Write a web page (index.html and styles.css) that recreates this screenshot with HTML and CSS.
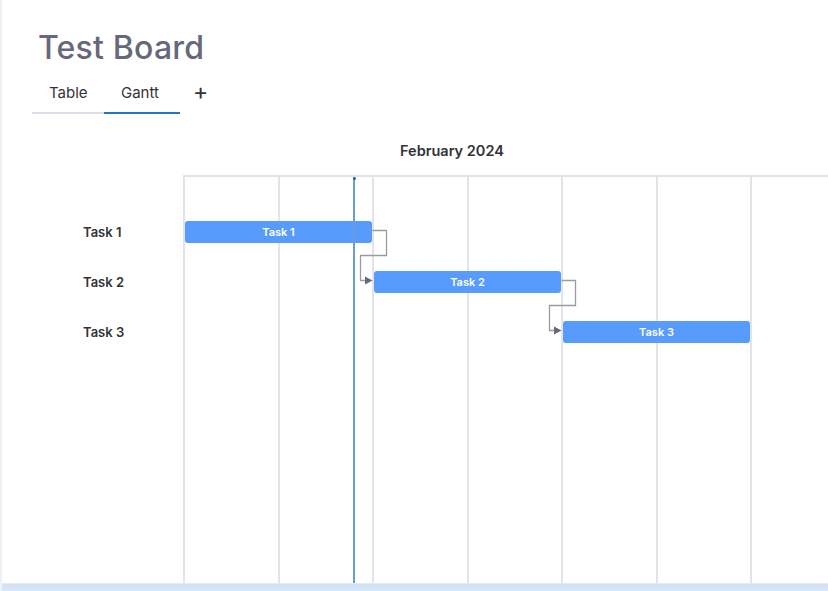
FILE: index.html
```html
<!DOCTYPE html>
<html lang="en">
<head>
    <meta charset="UTF-8">
    <meta name="viewport" content="width=device-width, initial-scale=1.0">
    <title>Test Board</title>
    <link rel="stylesheet" href="styles.css">
</head>
<body>
    <div class="board">
        <header class="board-header">
            <h1>Test Board</h1>
            <nav class="tabs">
                <span class="tab">Table</span>
                <span class="tab active">Gantt</span>
                <span class="tab-add">+</span>
            </nav>
        </header>

        <section class="gantt">
            <div class="gantt-title">February 2024</div>
            <div class="gantt-body">
                <div class="labels">
                    <div class="label">Task 1</div>
                    <div class="label">Task 2</div>
                    <div class="label">Task 3</div>
                </div>
                <div class="timeline">
                    <div class="columns">
                        <div class="col"></div><div class="col"></div><div class="col"></div>
                        <div class="col"></div><div class="col"></div><div class="col"></div>
                        <div class="col"></div>
                    </div>
                    <div class="rows">
                        <div class="row"><div class="bar" style="grid-column: 1 / 3">Task 1</div></div>
                        <div class="row"><div class="bar" style="grid-column: 3 / 5">Task 2</div></div>
                        <div class="row"><div class="bar" style="grid-column: 5 / 7">Task 3</div></div>
                    </div>
                    <svg class="links" width="645" height="410" viewBox="0 0 645 410">
                        <path d="M189.5 55.5 H203.5 V80.5 H177.5 V105.5 H183" />
                        <polygon points="182,101.5 189.5,105.5 182,109.5" />
                        <path d="M378.5 105.5 H392.5 V130.5 H366.5 V155.5 H372" />
                        <polygon points="371,151.5 378.5,155.5 371,159.5" />
                    </svg>
                    <div class="today"></div>
                </div>
            </div>
        </section>
        <div class="footer-band"></div>
    </div>
</body>
</html>
```

FILE: styles.css
```css
body {
    margin: 0;
    background: #fff;
    font-family: "Inter", "Noto Sans", sans-serif;
    color: #323338;
}
.board {
    height: 591px;
    border-left: 2px solid #eef1f6;
    box-sizing: border-box;
    display: flex;
    flex-direction: column;
    overflow: hidden;
}
.board-header {
    padding: 28px 0 0 30px;
}
h1 {
    margin: 0 0 0 6px;
    font-weight: 500;
    font-size: 32px;
    line-height: 40px;
    color: #676879;
    letter-spacing: 0.2px;
}
.tabs {
    display: flex;
    align-items: center;
    margin-top: 14px;
}
.tab {
    font-size: 15px;
    line-height: 20px;
    padding: 0 17px 9px;
    border-bottom: 2px solid #dcdfe7;
    color: #323338;
}
.tab:first-child {
    width: 38px;
}
.tab.active {
    width: 42px;
    border-bottom-color: #1f76c2;
}
.tab-add {
    font-size: 23px;
    line-height: 20px;
    margin: 0 0 12px 13px;
    color: #323338;
}
.gantt {
    flex: 1;
    display: flex;
    flex-direction: column;
    margin-top: 28px;
}
.gantt-title {
    font-weight: 600;
    font-size: 14.5px;
    line-height: 18px;
    padding-left: 398px;
    color: #323338;
}
.gantt-body {
    flex: 1;
    display: flex;
    margin-top: 15px;
}
.labels {
    flex: 0 0 181px;
    padding-top: 32px;
}
.label {
    height: 50px;
    line-height: 50px;
    padding-left: 81px;
    font-weight: 600;
    font-size: 13px;
}
.timeline {
    position: relative;
    flex: 1;
    min-width: 0;
    overflow: hidden;
    border-top: 2px solid #e1e4ea;
}
.columns {
    position: absolute;
    inset: 0;
    display: grid;
    grid-template-columns: repeat(7, 94.5px);
}
.col {
    border-left: 2px solid #e1e4ea;
}
.rows {
    position: relative;
    padding-top: 30px;
}
.row {
    height: 50px;
    display: grid;
    grid-template-columns: repeat(7, 94.5px);
    align-items: center;
}
.bar {
    height: 22px;
    margin: 0 0 0 2px;
    background: #579bfc;
    border-radius: 3px;
    color: #fff;
    font-weight: 600;
    font-size: 11px;
    line-height: 22px;
    text-align: center;
}
.links {
    position: absolute;
    left: 0;
    top: -2px;
}
.links path {
    fill: none;
    stroke: #9a9ba3;
    stroke-width: 1.3;
}
.links polygon {
    fill: #676879;
}
.today {
    position: absolute;
    left: 170px;
    top: 0;
    bottom: 0;
    width: 2px;
    background: #6a9bdb;
}
.today::before {
    content: "";
    position: absolute;
    left: -0.5px;
    top: 0;
    width: 3px;
    height: 3px;
    border-radius: 50%;
    background: #1f66b8;
}
.footer-band {
    height: 7px;
    border-top: 1px solid #e4ecf7;
    background: linear-gradient(#cfe1f7, #d8e7f9);
}
```
